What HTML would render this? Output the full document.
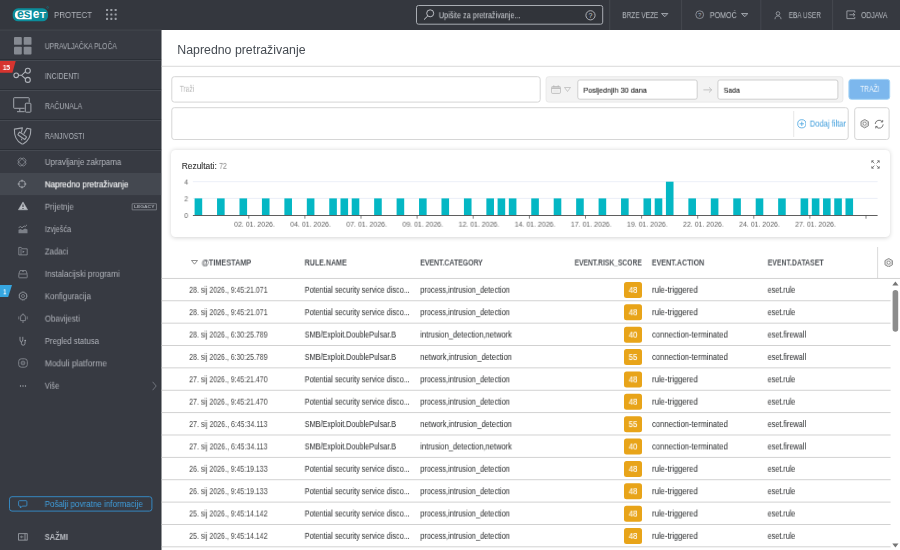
<!DOCTYPE html><html lang="hr"><head><meta charset="utf-8"><title>ESET PROTECT - Napredno pretraživanje</title><style>
html,body{margin:0;padding:0;width:900px;height:550px;overflow:hidden;background:#fff;}
body{position:relative;font-family:"Liberation Sans", sans-serif;}
.a{position:absolute;display:block;margin:0;padding:0;}
.t{position:absolute;white-space:nowrap;transform-origin:0 0;display:block;will-change:transform;}
</style></head><body>
<svg class="a" style="left:-1px;top:-1px" width="902" height="32"><rect x="1.00" y="1.00" width="900.00" height="30.00" fill="#34373e"/></svg>
<svg class="a" style="left:12px;top:6.3px;" width="38" height="17" viewBox="0 0 38 17"><rect x="0.7" y="2.3" width="35.3" height="13" rx="5.4" fill="#0b8d9b"/><path d="M7.4 4.4 H19.7 V13.3 H7.4 Q2.9 13.3 2.9 8.85 Q2.9 4.4 7.4 4.4 Z" fill="#fff"/><text x="5" y="12.35" font-family="Liberation Sans, sans-serif" font-weight="700" font-size="12" fill="#0b8d9b" textLength="13.6" lengthAdjust="spacingAndGlyphs">es</text><text x="20.7" y="12.35" font-family="Liberation Sans, sans-serif" font-weight="700" font-size="12" fill="#fff" textLength="6.6" lengthAdjust="spacingAndGlyphs">e</text><text x="27.7" y="12.3" font-family="Liberation Sans, sans-serif" font-weight="700" font-size="8.9" fill="#fff" textLength="6.2" lengthAdjust="spacingAndGlyphs">T</text><circle cx="35.6" cy="1.4" r="0.9" fill="none" stroke="#0b8d9b" stroke-width="0.4"/></svg>
<svg class="a" style="left:106px;top:9.4px;" width="12" height="11.5" viewBox="0 0 12 11.5"><rect x="0" y="0" width="2.1" height="2.1" rx="0.6" fill="#9da1a8"/><rect x="0" y="4.4" width="2.1" height="2.1" rx="0.6" fill="#9da1a8"/><rect x="0" y="8.8" width="2.1" height="2.1" rx="0.6" fill="#9da1a8"/><rect x="4.3" y="0" width="2.1" height="2.1" rx="0.6" fill="#9da1a8"/><rect x="4.3" y="4.4" width="2.1" height="2.1" rx="0.6" fill="#9da1a8"/><rect x="4.3" y="8.8" width="2.1" height="2.1" rx="0.6" fill="#9da1a8"/><rect x="8.6" y="0" width="2.1" height="2.1" rx="0.6" fill="#9da1a8"/><rect x="8.6" y="4.4" width="2.1" height="2.1" rx="0.6" fill="#9da1a8"/><rect x="8.6" y="8.8" width="2.1" height="2.1" rx="0.6" fill="#9da1a8"/></svg>
<svg class="a" style="left:415px;top:4px" width="190" height="22"><rect x="1.50" y="1.50" width="186.20" height="18.70" rx="2.00" fill="#31343a" stroke="#a9adb3" stroke-width="1.0"/></svg>
<svg class="a" style="left:422.5px;top:8.5px;" width="12" height="12" viewBox="0 0 12 12"><circle cx="7.2" cy="4.3" r="3.5" fill="none" stroke="#c9ccd1" stroke-width="0.9"/><path d="M4.8 6.9 L1 10.6" stroke="#c9ccd1" stroke-width="1" fill="none"/></svg>
<svg class="a" style="left:585.3px;top:9.8px;" width="11" height="11" viewBox="0 0 11 11"><circle cx="5.5" cy="5.3" r="4.6" fill="none" stroke="#c9ccd1" stroke-width="0.8"/><text x="5.5" y="8" text-anchor="middle" font-family="Liberation Sans, sans-serif" font-size="7" fill="#c9ccd1">?</text></svg>
<svg class="a" style="left:608px;top:-1px" width="293" height="32"><rect x="1.60" y="1.00" width="290.40" height="30.00" fill="#363940"/></svg>
<svg class="a" style="left:608px;top:-1px" width="4" height="32"><rect x="1.30" y="1.00" width="0.90" height="30.00" fill="#474a51"/></svg>
<svg class="a" style="left:680px;top:-1px" width="4" height="32"><rect x="1.20" y="1.00" width="0.90" height="30.00" fill="#474a51"/></svg>
<svg class="a" style="left:759px;top:-1px" width="4" height="32"><rect x="1.40" y="1.00" width="0.90" height="30.00" fill="#474a51"/></svg>
<svg class="a" style="left:831px;top:-1px" width="4" height="32"><rect x="1.20" y="1.00" width="0.90" height="30.00" fill="#474a51"/></svg>
<svg class="a" style="left:661.2px;top:13.1px;" width="7.4" height="4.5" viewBox="0 0 7.4 4.5"><path d="M0.5 0.5 H6.9 L3.7 3.8 Z" fill="#a6aab1" fill-opacity="0.22" stroke="#a6aab1" stroke-width="0.9" stroke-linejoin="round"/></svg>
<svg class="a" style="left:695.2px;top:10.4px;" width="9.4" height="9.4" viewBox="0 0 9.4 9.4"><circle cx="4.7" cy="4.7" r="3.9" fill="none" stroke="#a9adb4" stroke-width="0.7"/><text x="4.7" y="7" text-anchor="middle" font-family="Liberation Sans, sans-serif" font-size="6" fill="#a9adb4">?</text></svg>
<svg class="a" style="left:740.8px;top:13.1px;" width="7.4" height="4.5" viewBox="0 0 7.4 4.5"><path d="M0.5 0.5 H6.9 L3.7 3.8 Z" fill="#a6aab1" fill-opacity="0.22" stroke="#a6aab1" stroke-width="0.9" stroke-linejoin="round"/></svg>
<svg class="a" style="left:774.2px;top:10.6px;" width="9" height="10" viewBox="0 0 9 10"><circle cx="4" cy="2.5" r="1.8" fill="none" stroke="#a9adb4" stroke-width="0.75"/><path d="M1 8.2 C1 5.8 2.4 5 4 5 S7 5.8 7 8.2" fill="none" stroke="#a9adb4" stroke-width="0.75"/></svg>
<svg class="a" style="left:845.8px;top:9.9px;" width="10" height="10" viewBox="0 0 10 10"><path d="M8.8 2.6 V0.9 H0.9 V8.6 H8.8 V6.9" fill="none" stroke="#a9adb4" stroke-width="0.8"/><path d="M3.4 4.75 H8.8 M7 3 L8.8 4.75 L7 6.5" fill="none" stroke="#a9adb4" stroke-width="0.8"/></svg>
<svg class="a" style="left:-1px;top:29px" width="164" height="522"><rect x="1.00" y="1.00" width="161.60" height="520.00" fill="#373a42"/></svg>
<svg class="a" style="left:159px;top:29px" width="4" height="522"><rect x="1.40" y="1.00" width="1.20" height="520.00" fill="#33363c"/></svg>
<svg class="a" style="left:-1px;top:28px" width="164" height="4"><rect x="1.00" y="1.60" width="161.60" height="0.90" fill="#45484f"/></svg>
<svg class="a" style="left:-1px;top:58px" width="164" height="4"><rect x="1.00" y="1.20" width="161.60" height="0.90" fill="#2a2d33"/></svg>
<svg class="a" style="left:-1px;top:59px" width="164" height="3"><rect x="1.00" y="1.10" width="161.60" height="0.90" fill="#484c54"/></svg>
<svg class="a" style="left:-1px;top:88px" width="164" height="4"><rect x="1.00" y="1.20" width="161.60" height="0.90" fill="#2a2d33"/></svg>
<svg class="a" style="left:-1px;top:89px" width="164" height="3"><rect x="1.00" y="1.10" width="161.60" height="0.90" fill="#484c54"/></svg>
<svg class="a" style="left:-1px;top:118px" width="164" height="4"><rect x="1.00" y="1.20" width="161.60" height="0.90" fill="#2a2d33"/></svg>
<svg class="a" style="left:-1px;top:119px" width="164" height="3"><rect x="1.00" y="1.10" width="161.60" height="0.90" fill="#484c54"/></svg>
<svg class="a" style="left:-1px;top:148px" width="164" height="4"><rect x="1.00" y="1.20" width="161.60" height="0.90" fill="#2a2d33"/></svg>
<svg class="a" style="left:-1px;top:149px" width="164" height="3"><rect x="1.00" y="1.10" width="161.60" height="0.90" fill="#484c54"/></svg>
<svg class="a" style="left:13.7px;top:37.2px;" width="18" height="18" viewBox="0 0 18 18"><rect x="0" y="0" width="7.8" height="7.8" rx="0.9" fill="#868a92"/><rect x="0" y="9.7" width="7.8" height="7.8" rx="0.9" fill="#868a92"/><rect x="9.7" y="0" width="7.8" height="7.8" rx="0.9" fill="#868a92"/><rect x="9.7" y="9.7" width="7.8" height="7.8" rx="0.9" fill="#868a92"/></svg>
<svg class="a" style="left:13.3px;top:66.3px;" width="19" height="18" viewBox="0 0 19 18"><circle cx="3.2" cy="9.3" r="2.3" fill="none" stroke="#b0b4bb" stroke-width="1.1"/><circle cx="14.8" cy="4.7" r="2.5" fill="none" stroke="#b0b4bb" stroke-width="1.1"/><circle cx="14.8" cy="13.9" r="2.5" fill="none" stroke="#b0b4bb" stroke-width="1.1"/><path d="M5.5 9.3 H8.6 L12.5 5.7 M8.6 9.3 L12.5 12.9" fill="none" stroke="#b0b4bb" stroke-width="1.1"/></svg>
<svg class="a" style="left:0px;top:61.3px;" width="16" height="12" viewBox="0 0 16 12"><path d="M0 0 H15.7 L12.4 11.8 H0 Z" fill="#d6342f"/></svg>
<svg class="a" style="left:13.2px;top:97.3px;" width="19" height="17" viewBox="0 0 19 17"><path d="M11.6 11.3 H1.3 Q0.7 11.3 0.7 10.7 V1.3 Q0.7 0.7 1.3 0.7 H15.6 Q16.2 0.7 16.2 1.3 V5.4" fill="none" stroke="#a3a7ae" stroke-width="1"/><path d="M6.8 11.5 V14.4 M4 14.7 H11.6" fill="none" stroke="#a3a7ae" stroke-width="1"/><rect x="12.3" y="6.2" width="5.6" height="9" rx="0.8" fill="#373a42" stroke="#a3a7ae" stroke-width="1"/></svg>
<svg class="a" style="left:12.8px;top:126.5px;" width="20" height="19" viewBox="0 0 20 19"><path d="M8.5 5 L9.4 0.9 L1.4 2.1 C1.1 8.6 2.6 13.4 8.6 16.8 Q9.5 17.3 10.4 16.8 C16.4 13.4 18 8.6 17.8 2.1 L14 1.3 L11 6.4" fill="none" stroke="#a3a7ae" stroke-width="1.1" stroke-linejoin="round" stroke-linecap="round"/><g transform="rotate(35 9.2 8.8)"><rect x="4.9" y="7.2" width="8.6" height="3.2" rx="0.5" fill="none" stroke="#a3a7ae" stroke-width="1.1"/></g><path d="M8.5 11.7 L8.8 13.4" stroke="#a3a7ae" stroke-width="1" fill="none"/></svg>
<svg class="a" style="left:-1px;top:172px" width="164" height="25"><rect x="1.00" y="1.00" width="161.60" height="22.10" fill="#444850"/></svg>
<svg class="a" style="left:16.9px;top:156.7px;" width="10" height="10" viewBox="0 0 10 10"><g transform="rotate(45 5 5)" fill="none" stroke="#8f939b" stroke-width="0.7"><rect x="0.7" y="2.6" width="8.6" height="4.8" rx="2"/><rect x="2.6" y="0.7" width="4.8" height="8.6" rx="2"/></g></svg>
<svg class="a" style="left:16.9px;top:179.07px;" width="10" height="10" viewBox="0 0 10 10"><circle cx="5" cy="5" r="3.4" fill="none" stroke="#a9adb4" stroke-width="0.8"/><path d="M5 0.6 V3.2 M5 6.8 V9.4 M0.6 5 H3.2 M6.8 5 H9.4" stroke="#a9adb4" stroke-width="0.8"/></svg>
<svg class="a" style="left:17.5px;top:201.44px;" width="10" height="10" viewBox="0 0 10 10"><path d="M5 0.9 L9.6 8.8 H0.4 Z" fill="#b9bcc2" stroke="#b9bcc2" stroke-width="0.5" stroke-linejoin="round"/><path d="M5 3.6 V6.1 M5 6.9 V7.9" stroke="#373a42" stroke-width="1.1"/></svg>
<svg class="a" style="left:17.5px;top:223.81px;" width="10" height="10" viewBox="0 0 10 10"><path d="M0.6 3.6 L2.6 2.6 L4 3.8 L6.2 2 L7.2 2.6 L9 0.8" fill="none" stroke="#a3a7ae" stroke-width="0.7"/><path d="M0.5 9.2 V5.8 L2.6 5 L4.4 6 L7 4.6 L9.5 5.4 V9.2 Z" fill="#7b7f87"/></svg>
<svg class="a" style="left:17.5px;top:246.18px;" width="10" height="10" viewBox="0 0 10 10"><path d="M0.8 8.9 V1.4 H3.2 L4 2.8 H9.2 V8.9 Z" fill="none" stroke="#8f939b" stroke-width="0.8"/><path d="M3 3 V8.8" stroke="#8f939b" stroke-width="0.7"/><path d="M4.6 4.6 L6.6 5.8 L4.6 7 Z" fill="#8f939b"/></svg>
<svg class="a" style="left:17.5px;top:268.55px;" width="10" height="10" viewBox="0 0 10 10"><path d="M0.8 5 L2 1.6 H8 L9.2 5" fill="none" stroke="#8f939b" stroke-width="0.8"/><rect x="0.8" y="5" width="8.4" height="3.8" rx="0.5" fill="none" stroke="#8f939b" stroke-width="0.8"/><path d="M3.8 1.8 H6.2 L5 3.2 Z" fill="#8f939b"/></svg>
<svg class="a" style="left:17.5px;top:291.32px;" width="10" height="10" viewBox="0 0 10 10"><circle cx="5" cy="5" r="1.5" fill="none" stroke="#8f939b" stroke-width="0.7"/><path d="M5 1 L8.5 3 V7 L5 9 L1.5 7 V3 Z" fill="none" stroke="#8f939b" stroke-width="0.8" stroke-linejoin="round"/><circle cx="5" cy="5" r="4.2" fill="none" stroke="#8f939b" stroke-width="0.6" stroke-dasharray="1.3 0.9"/></svg>
<svg class="a" style="left:17.5px;top:313.29px;" width="10" height="10" viewBox="0 0 10 10"><path d="M2.6 7.6 V4.2 Q2.6 1.6 5 1.6 Q7.4 1.6 7.4 4.2 V7.6 Z" fill="none" stroke="#8f939b" stroke-width="0.8"/><path d="M5 0.4 V1.6 M4 9 H6" stroke="#8f939b" stroke-width="0.8"/><path d="M0.8 3.4 V6.4 M9.2 3.4 V6.4" stroke="#8f939b" stroke-width="0.7"/></svg>
<svg class="a" style="left:18.1px;top:335.66px;" width="10" height="10" viewBox="0 0 10 10"><path d="M2 0.8 V3.8 Q2 5.8 3.4 5.8 Q4.8 5.8 4.8 3.8 V0.8 M3.4 5.8 V7.4 Q3.4 9.2 5.2 9.2 Q7 9.2 7 7.4 V5.6" fill="none" stroke="#a3a7ae" stroke-width="0.8"/><circle cx="7.2" cy="4.6" r="0.9" fill="#a3a7ae"/></svg>
<svg class="a" style="left:17.5px;top:358.03000000000003px;" width="10" height="10" viewBox="0 0 10 10"><rect x="0.7" y="0.8" width="8.6" height="8.4" rx="2.6" fill="none" stroke="#8f939b" stroke-width="0.8"/><circle cx="5" cy="5" r="1.9" fill="none" stroke="#8f939b" stroke-width="0.7"/><path d="M3.6 5 H6.4" stroke="#8f939b" stroke-width="0.7"/></svg>
<svg class="a" style="left:17.5px;top:380.70000000000005px;" width="10" height="10" viewBox="0 0 10 10"><circle cx="2.5" cy="5" r="0.65" fill="#a9adb4"/><circle cx="5" cy="5" r="0.65" fill="#a9adb4"/><circle cx="7.5" cy="5" r="0.65" fill="#a9adb4"/></svg>
<svg class="a" style="left:130px;top:202px" width="28" height="10"><rect x="2.15" y="1.75" width="24.30" height="6.10" rx="0.05" fill="none" stroke="#8f939b" stroke-width="0.7"/></svg>
<svg class="a" style="left:151.5px;top:380.5px;" width="5" height="10" viewBox="0 0 5 10"><path d="M0.6 0.8 L4.2 5 L0.6 9.2" fill="none" stroke="#7f838b" stroke-width="0.8"/></svg>
<svg class="a" style="left:0px;top:285px;" width="13" height="12.2" viewBox="0 0 13 12.2"><path d="M0 0 H12 L8.2 12 H0 Z" fill="#36a6e0"/></svg>
<svg class="a" style="left:8px;top:495px" width="146" height="18"><rect x="1.50" y="1.70" width="142.40" height="14.40" rx="2.50" fill="none" stroke="#3587c0" stroke-width="1.0"/></svg>
<svg class="a" style="left:17.6px;top:499.6px;" width="10" height="9" viewBox="0 0 10 9"><path d="M1.5 0.7 H8 Q8.9 0.7 8.9 1.6 V5.2 Q8.9 6.1 8 6.1 H4.2 L2.4 8 V6.1 H1.5 Q0.6 6.1 0.6 5.2 V1.6 Q0.6 0.7 1.5 0.7 Z" fill="none" stroke="#3b97d6" stroke-width="0.8"/></svg>
<svg class="a" style="left:17.6px;top:533.4px;" width="10" height="8" viewBox="0 0 10 8"><rect x="0.6" y="0.7" width="8.6" height="6.4" fill="none" stroke="#a3a7ae" stroke-width="0.8"/><path d="M7 0.7 V7.1" stroke="#a3a7ae" stroke-width="0.8"/><path d="M5.4 3.9 H2.6 M3.8 2.8 L2.6 3.9 L3.8 5" fill="none" stroke="#a3a7ae" stroke-width="0.7"/></svg>
<svg class="a" style="left:160px;top:29px" width="741" height="522"><rect x="1.60" y="1.00" width="738.40" height="520.00" fill="#fff"/></svg>
<svg class="a" style="left:160px;top:64px" width="741" height="4"><rect x="1.60" y="1.80" width="738.40" height="0.90" fill="#d4d4d4"/></svg>
<svg class="a" style="left:170px;top:75px" width="372" height="29"><rect x="1.80" y="1.70" width="368.40" height="25.40" rx="2.50" fill="#fff" stroke="#d6d6d6" stroke-width="1.0"/></svg>
<svg class="a" style="left:544px;top:75px" width="301" height="29"><rect x="2.10" y="1.70" width="296.80" height="25.40" rx="2.50" fill="#f3f3f3" stroke="#e9e9e9" stroke-width="1.0"/></svg>
<svg class="a" style="left:551px;top:85px;" width="10" height="9" viewBox="0 0 10 9"><rect x="0.6" y="1.5" width="8.8" height="6.9" rx="0.9" fill="#f7f7f7" stroke="#b5b5b5" stroke-width="0.8"/><rect x="1" y="1.9" width="8" height="1.4" fill="#cfcfcf"/><path d="M0.6 3.5 H9.4 M2.8 0.3 V2.2 M7.2 0.3 V2.2" stroke="#b5b5b5" stroke-width="0.8"/><path d="M2.2 5.2 H7.8 M2.2 6.8 H7.8" stroke="#dcdcdc" stroke-width="0.6"/></svg>
<svg class="a" style="left:564px;top:87px;" width="7" height="5.2" viewBox="0 0 7 5.2"><path d="M0.5 0.5 H6.5 L3.5 4.5 Z" fill="#b5b5b5" fill-opacity="0" stroke="#b5b5b5" stroke-width="0.7" stroke-linejoin="round"/></svg>
<svg class="a" style="left:576px;top:78px" width="123" height="23"><rect x="1.80" y="2.00" width="119.40" height="19.20" rx="2.00" fill="#fff" stroke="#cfcfcf" stroke-width="1.0"/></svg>
<svg class="a" style="left:703.4px;top:85.6px;" width="10" height="8" viewBox="0 0 10 8"><path d="M0.4 3.9 H8.6 M6 1.3 L8.7 3.9 L6 6.5" fill="none" stroke="#b0b0b0" stroke-width="0.7"/></svg>
<svg class="a" style="left:716px;top:78px" width="124" height="23"><rect x="1.90" y="2.00" width="120.00" height="19.20" rx="2.00" fill="#fff" stroke="#cfcfcf" stroke-width="1.0"/></svg>
<svg class="a" style="left:847px;top:77px" width="45" height="24"><rect x="1.90" y="2.40" width="40.80" height="19.90" rx="2.50" fill="#7cb7ed" stroke="#a3d3f6" stroke-width="1.0"/></svg>
<svg class="a" style="left:170px;top:106px" width="680" height="35"><rect x="1.80" y="1.70" width="676.40" height="31.80" rx="2.50" fill="#fff" stroke="#d6d6d6" stroke-width="1.0"/></svg>
<svg class="a" style="left:792px;top:110px" width="4" height="28"><rect x="1.30" y="1.00" width="0.90" height="26.00" fill="#e4e4e4"/></svg>
<svg class="a" style="left:796.9px;top:119.1px;" width="9.6" height="9.6" viewBox="0 0 9.6 9.6"><circle cx="4.8" cy="4.8" r="4.1" fill="none" stroke="#46a3e0" stroke-width="0.8"/><path d="M4.8 2.6 V7 M2.6 4.8 H7" stroke="#46a3e0" stroke-width="0.8"/></svg>
<svg class="a" style="left:853px;top:106px" width="38" height="35"><rect x="1.70" y="1.70" width="34.40" height="31.80" rx="2.50" fill="#fff" stroke="#d6d6d6" stroke-width="1.0"/></svg>
<svg class="a" style="left:859.8px;top:119.2px;" width="9.4" height="9.4" viewBox="0 0 9.4 9.4"><circle cx="4.7" cy="4.7" r="1.6" fill="none" stroke="#6e6e6e" stroke-width="0.7"/><path d="M4.7 0.5 L8.4 2.6 V6.8 L4.7 8.9 L1 6.8 V2.6 Z" fill="none" stroke="#6e6e6e" stroke-width="0.8" stroke-linejoin="round"/><path d="M4.7 1.6 L7.4 3.15 V6.25 L4.7 7.8 L2 6.25 V3.15 Z" fill="none" stroke="#6e6e6e" stroke-width="0.45" stroke-linejoin="round" opacity="0.7"/></svg>
<svg class="a" style="left:874.2px;top:118.8px;" width="10.4" height="10.4" viewBox="0 0 10.4 10.4"><path d="M1.2 5 A4 4 0 0 1 8.3 2.7" fill="none" stroke="#4a4a4a" stroke-width="0.75"/><path d="M9.2 5.4 A4 4 0 0 1 2.1 7.7" fill="none" stroke="#4a4a4a" stroke-width="0.75"/><path d="M8.7 1 V3 H6.8 M1.7 9.4 V7.4 H3.6" fill="none" stroke="#4a4a4a" stroke-width="0.7"/></svg>
<div class="a" style="left:171.2px;top:150px;width:718.6px;height:86.8px;background:#fff;border-radius:4.5px;box-shadow:0 0.6px 4.5px rgba(0,0,0,0.17);"></div>
<svg class="a" style="left:871px;top:159.8px;" width="9" height="9" viewBox="0 0 9 9"><path d="M5.6 3.4 L8.2 0.8 M6.2 0.8 H8.2 V2.8 M3.4 5.6 L0.8 8.2 M0.8 6.2 V8.2 H2.8 M3.4 3.4 L0.8 0.8 M0.8 2.8 V0.8 H2.8 M5.6 5.6 L8.2 8.2 M8.2 6.2 V8.2 H6.2" fill="none" stroke="#555" stroke-width="0.7"/></svg>
<svg class="a" style="left:0px;top:0px;" width="900" height="550" viewBox="0 0 900 550"><path d="M192.9 181.7 H877.6 M192.9 198.4 H877.6" stroke="#e6eaf5" stroke-width="0.8"/><rect x="194.60" y="198.4" width="7.6" height="16.8" fill="#04b7c4"/><rect x="217.04" y="198.4" width="7.6" height="16.8" fill="#04b7c4"/><rect x="239.49" y="198.4" width="7.6" height="16.8" fill="#04b7c4"/><rect x="261.93" y="198.4" width="7.6" height="16.8" fill="#04b7c4"/><rect x="284.38" y="198.4" width="7.6" height="16.8" fill="#04b7c4"/><rect x="306.82" y="198.4" width="7.6" height="16.8" fill="#04b7c4"/><rect x="329.26" y="198.4" width="7.6" height="16.8" fill="#04b7c4"/><rect x="340.49" y="198.4" width="7.6" height="16.8" fill="#04b7c4"/><rect x="351.71" y="198.4" width="7.6" height="16.8" fill="#04b7c4"/><rect x="374.15" y="198.4" width="7.6" height="16.8" fill="#04b7c4"/><rect x="396.60" y="198.4" width="7.6" height="16.8" fill="#04b7c4"/><rect x="419.04" y="198.4" width="7.6" height="16.8" fill="#04b7c4"/><rect x="441.48" y="198.4" width="7.6" height="16.8" fill="#04b7c4"/><rect x="463.93" y="198.4" width="7.6" height="16.8" fill="#04b7c4"/><rect x="486.37" y="198.4" width="7.6" height="16.8" fill="#04b7c4"/><rect x="497.59" y="198.4" width="7.6" height="16.8" fill="#04b7c4"/><rect x="508.82" y="198.4" width="7.6" height="16.8" fill="#04b7c4"/><rect x="531.26" y="198.4" width="7.6" height="16.8" fill="#04b7c4"/><rect x="553.70" y="198.4" width="7.6" height="16.8" fill="#04b7c4"/><rect x="576.15" y="198.4" width="7.6" height="16.8" fill="#04b7c4"/><rect x="598.59" y="198.4" width="7.6" height="16.8" fill="#04b7c4"/><rect x="621.04" y="198.4" width="7.6" height="16.8" fill="#04b7c4"/><rect x="643.48" y="198.4" width="7.6" height="16.8" fill="#04b7c4"/><rect x="654.70" y="198.4" width="7.6" height="16.8" fill="#04b7c4"/><rect x="688.37" y="198.4" width="7.6" height="16.8" fill="#04b7c4"/><rect x="710.81" y="198.4" width="7.6" height="16.8" fill="#04b7c4"/><rect x="733.26" y="198.4" width="7.6" height="16.8" fill="#04b7c4"/><rect x="755.70" y="198.4" width="7.6" height="16.8" fill="#04b7c4"/><rect x="778.14" y="198.4" width="7.6" height="16.8" fill="#04b7c4"/><rect x="800.59" y="198.4" width="7.6" height="16.8" fill="#04b7c4"/><rect x="811.81" y="198.4" width="7.6" height="16.8" fill="#04b7c4"/><rect x="823.03" y="198.4" width="7.6" height="16.8" fill="#04b7c4"/><rect x="834.25" y="198.4" width="7.6" height="16.8" fill="#04b7c4"/><rect x="845.48" y="198.4" width="7.6" height="16.8" fill="#04b7c4"/><rect x="665.92" y="181.7" width="7.6" height="33.5" fill="#04b7c4"/><path d="M192.9 215.5 H877.6" stroke="#4d4d4d" stroke-width="0.9"/><path d="M248.8 215.5 V218.7" stroke="#4d4d4d" stroke-width="0.7"/><path d="M304.9 215.5 V218.7" stroke="#4d4d4d" stroke-width="0.7"/><path d="M361.0 215.5 V218.7" stroke="#4d4d4d" stroke-width="0.7"/><path d="M417.1 215.5 V218.7" stroke="#4d4d4d" stroke-width="0.7"/><path d="M473.2 215.5 V218.7" stroke="#4d4d4d" stroke-width="0.7"/><path d="M529.4 215.5 V218.7" stroke="#4d4d4d" stroke-width="0.7"/><path d="M585.5 215.5 V218.7" stroke="#4d4d4d" stroke-width="0.7"/><path d="M641.6 215.5 V218.7" stroke="#4d4d4d" stroke-width="0.7"/><path d="M697.7 215.5 V218.7" stroke="#4d4d4d" stroke-width="0.7"/><path d="M753.8 215.5 V218.7" stroke="#4d4d4d" stroke-width="0.7"/><path d="M809.9 215.5 V218.7" stroke="#4d4d4d" stroke-width="0.7"/><path d="M866.0 215.5 V218.7" stroke="#4d4d4d" stroke-width="0.7"/></svg>
<svg class="a" style="left:190.6px;top:260.2px;" width="7.4" height="5.4" viewBox="0 0 7.4 5.4"><path d="M0.5 0.5 H6.5 L3.5 4.2 Z" fill="none" stroke="#6a6a6a" stroke-width="0.75" stroke-linejoin="round"/></svg>
<svg class="a" style="left:876px;top:246px" width="4" height="34"><rect x="1.20" y="1.00" width="0.90" height="31.50" fill="#d6d6d6"/></svg>
<svg class="a" style="left:884.2px;top:257.9px;" width="9.4" height="9.4" viewBox="0 0 9.4 9.4"><circle cx="4.7" cy="4.7" r="1.6" fill="none" stroke="#6e6e6e" stroke-width="0.7"/><path d="M4.7 0.5 L8.4 2.6 V6.8 L4.7 8.9 L1 6.8 V2.6 Z" fill="none" stroke="#6e6e6e" stroke-width="0.8" stroke-linejoin="round"/><path d="M4.7 1.6 L7.4 3.15 V6.25 L4.7 7.8 L2 6.25 V3.15 Z" fill="none" stroke="#6e6e6e" stroke-width="0.45" stroke-linejoin="round" opacity="0.7"/></svg>
<svg class="a" style="left:160px;top:276px" width="741" height="4"><rect x="1.60" y="1.95" width="738.40" height="0.90" fill="#cdcdcd"/></svg>
<svg class="a" style="left:623px;top:281px" width="20" height="18"><rect x="1.00" y="1.00" width="18.00" height="16.00" rx="2.5" fill="#e8a419"/></svg>
<svg class="a" style="left:160px;top:299px" width="732" height="4"><rect x="1.60" y="1.32" width="729.00" height="0.90" fill="#cdcdcd"/></svg>
<svg class="a" style="left:623px;top:303px" width="20" height="19"><rect x="1.00" y="1.37" width="18.00" height="16.00" rx="2.5" fill="#e8a419"/></svg>
<svg class="a" style="left:160px;top:321px" width="732" height="4"><rect x="1.60" y="1.69" width="729.00" height="0.90" fill="#cdcdcd"/></svg>
<svg class="a" style="left:623px;top:325px" width="20" height="19"><rect x="1.00" y="1.74" width="18.00" height="16.00" rx="2.5" fill="#e8a419"/></svg>
<svg class="a" style="left:160px;top:344px" width="732" height="3"><rect x="1.60" y="1.06" width="729.00" height="0.90" fill="#cdcdcd"/></svg>
<svg class="a" style="left:623px;top:348px" width="20" height="19"><rect x="1.00" y="1.11" width="18.00" height="16.00" rx="2.5" fill="#e8a419"/></svg>
<svg class="a" style="left:160px;top:366px" width="732" height="4"><rect x="1.60" y="1.43" width="729.00" height="0.90" fill="#cdcdcd"/></svg>
<svg class="a" style="left:623px;top:370px" width="20" height="19"><rect x="1.00" y="1.48" width="18.00" height="16.00" rx="2.5" fill="#e8a419"/></svg>
<svg class="a" style="left:160px;top:388px" width="732" height="4"><rect x="1.60" y="1.80" width="729.00" height="0.90" fill="#cdcdcd"/></svg>
<svg class="a" style="left:623px;top:392px" width="20" height="19"><rect x="1.00" y="1.85" width="18.00" height="16.00" rx="2.5" fill="#e8a419"/></svg>
<svg class="a" style="left:160px;top:411px" width="732" height="4"><rect x="1.60" y="1.17" width="729.00" height="0.90" fill="#cdcdcd"/></svg>
<svg class="a" style="left:623px;top:415px" width="20" height="19"><rect x="1.00" y="1.22" width="18.00" height="16.00" rx="2.5" fill="#e8a419"/></svg>
<svg class="a" style="left:160px;top:433px" width="732" height="4"><rect x="1.60" y="1.54" width="729.00" height="0.90" fill="#cdcdcd"/></svg>
<svg class="a" style="left:623px;top:437px" width="20" height="19"><rect x="1.00" y="1.59" width="18.00" height="16.00" rx="2.5" fill="#e8a419"/></svg>
<svg class="a" style="left:160px;top:455px" width="732" height="4"><rect x="1.60" y="1.91" width="729.00" height="0.90" fill="#cdcdcd"/></svg>
<svg class="a" style="left:623px;top:459px" width="20" height="19"><rect x="1.00" y="1.96" width="18.00" height="16.00" rx="2.5" fill="#e8a419"/></svg>
<svg class="a" style="left:160px;top:478px" width="732" height="4"><rect x="1.60" y="1.28" width="729.00" height="0.90" fill="#cdcdcd"/></svg>
<svg class="a" style="left:623px;top:482px" width="20" height="19"><rect x="1.00" y="1.33" width="18.00" height="16.00" rx="2.5" fill="#e8a419"/></svg>
<svg class="a" style="left:160px;top:500px" width="732" height="4"><rect x="1.60" y="1.65" width="729.00" height="0.90" fill="#cdcdcd"/></svg>
<svg class="a" style="left:623px;top:504px" width="20" height="19"><rect x="1.00" y="1.70" width="18.00" height="16.00" rx="2.5" fill="#e8a419"/></svg>
<svg class="a" style="left:160px;top:523px" width="732" height="3"><rect x="1.60" y="1.02" width="729.00" height="0.90" fill="#cdcdcd"/></svg>
<svg class="a" style="left:623px;top:527px" width="20" height="19"><rect x="1.00" y="1.07" width="18.00" height="16.00" rx="2.5" fill="#e8a419"/></svg>
<svg class="a" style="left:160px;top:545px" width="732" height="4"><rect x="1.60" y="1.39" width="729.00" height="0.90" fill="#cdcdcd"/></svg>
<svg class="a" style="left:891px;top:289px" width="9" height="44"><rect x="1.60" y="1.00" width="5.60" height="41.80" rx="2.8" fill="#8c8c8c"/></svg>
<svg class="a" style="left:891.8px;top:281.4px;" width="7" height="5" viewBox="0 0 7 5"><path d="M0.3 4.4 L3.4 0.4 L6.5 4.4 Z" fill="#757575"/></svg>
<svg class="a" style="left:891.8px;top:543.4px;" width="7" height="5" viewBox="0 0 7 5"><path d="M0.3 0.4 L3.4 4.4 L6.5 0.4 Z" fill="#757575"/></svg>
<span class="t" style="left:54px;top:8px;font-size:9.2px;line-height:14px;color:#b0b3ba;transform:translate(0.00px,0.00px) scaleX(0.8655);">PROTECT</span>
<span class="t" style="left:438px;top:8px;font-size:8.8px;line-height:14px;color:#cfd2d7;transform:translate(0.80px,0.20px) scaleX(0.8282);">Upišite za pretraživanje...</span>
<span class="t" style="left:622px;top:8px;font-size:8.7px;line-height:14px;color:#bcc0c6;transform:translate(0.30px,0.10px) scaleX(0.7456);">BRZE VEZE</span>
<span class="t" style="left:709px;top:8px;font-size:8.7px;line-height:14px;color:#bcc0c6;transform:translate(0.80px,0.10px) scaleX(0.8225);">POMOĆ</span>
<span class="t" style="left:788px;top:8px;font-size:8.7px;line-height:14px;color:#bcc0c6;transform:translate(0.80px,0.10px) scaleX(0.7362);">EBA USER</span>
<span class="t" style="left:861px;top:8px;font-size:8.7px;line-height:14px;color:#bcc0c6;transform:translate(0.00px,0.10px) scaleX(0.7888);">ODJAVA</span>
<span class="t" style="left:44px;top:40px;font-size:8.6px;line-height:13px;color:#adb1b8;transform:translate(0.80px,0.10px) scaleX(0.7784);">UPRAVLJAČKA PLOČA</span>
<span class="t" style="left:44px;top:70px;font-size:8.6px;line-height:13px;color:#adb1b8;transform:translate(0.80px,0.00px) scaleX(0.8006);">INCIDENTI</span>
<span class="t" style="left:2px;top:62px;font-size:7.4px;line-height:12px;color:#fff;font-weight:700;transform:translate(0.80px,0.00px) scaleX(0.8865);">15</span>
<span class="t" style="left:44px;top:100px;font-size:8.6px;line-height:13px;color:#adb1b8;transform:translate(0.90px,0.10px) scaleX(0.7968);">RAČUNALA</span>
<span class="t" style="left:44px;top:130px;font-size:8.6px;line-height:13px;color:#adb1b8;transform:translate(0.90px,0.00px) scaleX(0.7763);">RANJIVOSTI</span>
<span class="t" style="left:44px;top:155px;font-size:8.7px;line-height:14px;color:#b0b3ba;transform:translate(0.80px,0.00px) scaleX(0.9092);">Upravljanje zakrpama</span>
<span class="t" style="left:44px;top:177px;font-size:8.7px;line-height:14px;color:#f4f5f6;-webkit-text-stroke:0.15px #f4f5f6;transform:translate(0.80px,0.37px) scaleX(0.9257);">Napredno pretraživanje</span>
<span class="t" style="left:44px;top:199px;font-size:8.7px;line-height:14px;color:#b0b3ba;transform:translate(0.80px,0.74px) scaleX(0.9238);">Prijetnje</span>
<span class="t" style="left:44px;top:222px;font-size:8.7px;line-height:14px;color:#b0b3ba;transform:translate(0.80px,0.11px) scaleX(0.8378);">Izvješća</span>
<span class="t" style="left:44px;top:244px;font-size:8.7px;line-height:14px;color:#b0b3ba;transform:translate(0.80px,0.48px) scaleX(0.8935);">Zadaci</span>
<span class="t" style="left:44px;top:266px;font-size:8.7px;line-height:14px;color:#b0b3ba;transform:translate(0.80px,0.85px) scaleX(0.9220);">Instalacijski programi</span>
<span class="t" style="left:44px;top:289px;font-size:8.7px;line-height:14px;color:#b0b3ba;transform:translate(0.80px,0.22px) scaleX(0.9157);">Konfiguracija</span>
<span class="t" style="left:44px;top:311px;font-size:8.7px;line-height:14px;color:#b0b3ba;transform:translate(0.80px,0.59px) scaleX(0.9173);">Obavijesti</span>
<span class="t" style="left:44px;top:333px;font-size:8.7px;line-height:14px;color:#b0b3ba;transform:translate(0.80px,0.96px) scaleX(0.8977);">Pregled statusa</span>
<span class="t" style="left:44px;top:356px;font-size:8.7px;line-height:14px;color:#b0b3ba;transform:translate(0.80px,0.33px) scaleX(0.9652);">Moduli platforme</span>
<span class="t" style="left:44px;top:378px;font-size:8.7px;line-height:14px;color:#b0b3ba;transform:translate(0.80px,0.70px) scaleX(0.8597);">Više</span>
<span class="t" style="left:134px;top:203px;font-size:4.4px;line-height:7px;color:#a5a9b0;font-weight:700;transform:translate(0.00px,0.40px) scaleX(1.1149);">LEGACY</span>
<span class="t" style="left:3px;top:286px;font-size:7.2px;line-height:11px;color:#fff;font-weight:700;transform:translate(0.30px,0.30px) scaleX(0.7250);">1</span>
<span class="t" style="left:44px;top:497px;font-size:8.7px;line-height:14px;color:#3f9fde;transform:translate(0.70px,0.00px) scaleX(0.9225);">Pošalji povratne informacije</span>
<span class="t" style="left:44px;top:530px;font-size:8.4px;line-height:13px;color:#b9bcc2;font-weight:700;transform:translate(0.70px,0.90px) scaleX(0.8940);">SAŽMI</span>
<span class="t" style="left:177px;top:40px;font-size:12.0px;line-height:18px;color:#454b52;transform:translate(0.30px,0.50px) scaleX(1.0277);">Napredno pretraživanje</span>
<span class="t" style="left:179px;top:82px;font-size:8.4px;line-height:13px;color:#b8b8b8;transform:translate(0.80px,0.80px) scaleX(0.7863);">Traži</span>
<span class="t" style="left:583px;top:83px;font-size:8.1px;line-height:13px;color:#1c1c1c;-webkit-text-stroke:0.12px #1c1c1c;transform:translate(0.30px,0.70px) scaleX(0.8973);">Posljednjih 30 dana</span>
<span class="t" style="left:723px;top:83px;font-size:8.1px;line-height:13px;color:#1c1c1c;-webkit-text-stroke:0.12px #1c1c1c;transform:translate(0.70px,0.70px) scaleX(0.8463);">Sada</span>
<span class="t" style="left:860px;top:82px;font-size:8.4px;line-height:13px;color:#eef6fd;transform:translate(0.20px,0.80px) scaleX(0.7933);">TRAŽI</span>
<span class="t" style="left:809px;top:117px;font-size:8.4px;line-height:13px;color:#3d9cdb;transform:translate(0.80px,0.60px) scaleX(0.9018);">Dodaj filtar</span>
<span class="t" style="left:181px;top:159px;font-size:8.2px;line-height:13px;color:#333;-webkit-text-stroke:0.1px #333;transform:translate(0.70px,0.90px) scaleX(1.0281);">Rezultati:</span>
<span class="t" style="left:219px;top:159px;font-size:8.3px;line-height:13px;color:#8c8c8c;transform:translate(0.10px,0.90px) scaleX(0.8447);">72</span>
<span class="t" style="left:184px;top:176px;font-size:6.9px;line-height:11px;color:#5c5c5c;transform:translate(0.40px,0.60px) scaleX(0.9626);">4</span>
<span class="t" style="left:184px;top:193px;font-size:6.9px;line-height:11px;color:#5c5c5c;transform:translate(0.40px,0.30px) scaleX(0.9626);">2</span>
<span class="t" style="left:184px;top:210px;font-size:6.9px;line-height:11px;color:#5c5c5c;transform:translate(0.40px,0.00px) scaleX(0.9626);">0</span>
<span class="t" style="left:234px;top:218px;font-size:7px;line-height:11px;color:#606060;transform:translate(0.10px,0.70px) scaleX(0.9957);">02. 01. 2026.</span>
<span class="t" style="left:290px;top:218px;font-size:7px;line-height:11px;color:#606060;transform:translate(0.21px,0.70px) scaleX(0.9957);">04. 01. 2026.</span>
<span class="t" style="left:346px;top:218px;font-size:7px;line-height:11px;color:#606060;transform:translate(0.32px,0.70px) scaleX(0.9957);">07. 01. 2026.</span>
<span class="t" style="left:402px;top:218px;font-size:7px;line-height:11px;color:#606060;transform:translate(0.43px,0.70px) scaleX(0.9957);">09. 01. 2026.</span>
<span class="t" style="left:458px;top:218px;font-size:7px;line-height:11px;color:#606060;transform:translate(0.54px,0.70px) scaleX(0.9957);">12. 01. 2026.</span>
<span class="t" style="left:514px;top:218px;font-size:7px;line-height:11px;color:#606060;transform:translate(0.65px,0.70px) scaleX(0.9957);">14. 01. 2026.</span>
<span class="t" style="left:570px;top:218px;font-size:7px;line-height:11px;color:#606060;transform:translate(0.76px,0.70px) scaleX(0.9957);">17. 01. 2026.</span>
<span class="t" style="left:626px;top:218px;font-size:7px;line-height:11px;color:#606060;transform:translate(0.87px,0.70px) scaleX(0.9957);">19. 01. 2026.</span>
<span class="t" style="left:682px;top:218px;font-size:7px;line-height:11px;color:#606060;transform:translate(0.98px,0.70px) scaleX(0.9957);">22. 01. 2026.</span>
<span class="t" style="left:739px;top:218px;font-size:7px;line-height:11px;color:#606060;transform:translate(0.09px,0.70px) scaleX(0.9957);">24. 01. 2026.</span>
<span class="t" style="left:795px;top:218px;font-size:7px;line-height:11px;color:#606060;transform:translate(0.20px,0.70px) scaleX(0.9957);">27. 01. 2026.</span>
<span class="t" style="left:201px;top:256px;font-size:8.3px;line-height:13px;color:#4f5358;font-weight:700;transform:translate(0.70px,0.50px) scaleX(0.8785);">@TIMESTAMP</span>
<span class="t" style="left:304px;top:256px;font-size:8.3px;line-height:13px;color:#4f5358;font-weight:700;transform:translate(0.60px,0.50px) scaleX(0.8555);">RULE.NAME</span>
<span class="t" style="left:420px;top:256px;font-size:8.3px;line-height:13px;color:#4f5358;font-weight:700;transform:translate(0.30px,0.50px) scaleX(0.8316);">EVENT.CATEGORY</span>
<span class="t" style="left:574px;top:256px;font-size:8.3px;line-height:13px;color:#4f5358;font-weight:700;transform:translate(0.60px,0.50px) scaleX(0.8096);">EVENT.RISK_SCORE</span>
<span class="t" style="left:651px;top:256px;font-size:8.3px;line-height:13px;color:#4f5358;font-weight:700;transform:translate(0.80px,0.50px) scaleX(0.8626);">EVENT.ACTION</span>
<span class="t" style="left:767px;top:256px;font-size:8.3px;line-height:13px;color:#4f5358;font-weight:700;transform:translate(0.70px,0.50px) scaleX(0.8343);">EVENT.DATASET</span>
<span class="t" style="left:189px;top:283px;font-size:8.2px;line-height:13px;color:#454545;transform:translate(0.20px,0.80px) scaleX(0.8514);">28. sij 2026., 9:45:21.071</span>
<span class="t" style="left:304px;top:283px;font-size:8.2px;line-height:13px;color:#1e2022;transform:translate(0.70px,0.80px) scaleX(0.8831);">Potential security service disco...</span>
<span class="t" style="left:420px;top:283px;font-size:8.2px;line-height:13px;color:#1e2022;transform:translate(0.30px,0.80px) scaleX(0.8988);">process,intrusion_detection</span>
<span class="t" style="left:628px;top:283px;font-size:8.4px;line-height:13px;color:#fff;-webkit-text-stroke:0.1px #fff;transform:translate(0.70px,0.90px) scaleX(0.9219);">48</span>
<span class="t" style="left:652px;top:283px;font-size:8.2px;line-height:13px;color:#1e2022;transform:translate(0.00px,0.80px) scaleX(0.9404);">rule-triggered</span>
<span class="t" style="left:767px;top:283px;font-size:8.2px;line-height:13px;color:#1e2022;transform:translate(0.70px,0.80px) scaleX(0.8788);">eset.rule</span>
<span class="t" style="left:189px;top:306px;font-size:8.2px;line-height:13px;color:#454545;transform:translate(0.20px,0.17px) scaleX(0.8514);">28. sij 2026., 9:45:21.071</span>
<span class="t" style="left:304px;top:306px;font-size:8.2px;line-height:13px;color:#1e2022;transform:translate(0.70px,0.17px) scaleX(0.8831);">Potential security service disco...</span>
<span class="t" style="left:420px;top:306px;font-size:8.2px;line-height:13px;color:#1e2022;transform:translate(0.30px,0.17px) scaleX(0.8988);">process,intrusion_detection</span>
<span class="t" style="left:628px;top:306px;font-size:8.4px;line-height:13px;color:#fff;-webkit-text-stroke:0.1px #fff;transform:translate(0.70px,0.27px) scaleX(0.9219);">48</span>
<span class="t" style="left:652px;top:306px;font-size:8.2px;line-height:13px;color:#1e2022;transform:translate(0.00px,0.17px) scaleX(0.9404);">rule-triggered</span>
<span class="t" style="left:767px;top:306px;font-size:8.2px;line-height:13px;color:#1e2022;transform:translate(0.70px,0.17px) scaleX(0.8788);">eset.rule</span>
<span class="t" style="left:189px;top:328px;font-size:8.2px;line-height:13px;color:#454545;transform:translate(0.20px,0.54px) scaleX(0.8514);">28. sij 2026., 6:30:25.789</span>
<span class="t" style="left:304px;top:328px;font-size:8.2px;line-height:13px;color:#1e2022;transform:translate(0.70px,0.54px) scaleX(0.8857);">SMB/Exploit.DoublePulsar.B</span>
<span class="t" style="left:420px;top:328px;font-size:8.2px;line-height:13px;color:#1e2022;transform:translate(0.30px,0.54px) scaleX(0.9189);">intrusion_detection,network</span>
<span class="t" style="left:628px;top:328px;font-size:8.4px;line-height:13px;color:#fff;-webkit-text-stroke:0.1px #fff;transform:translate(0.70px,0.64px) scaleX(0.9219);">40</span>
<span class="t" style="left:652px;top:328px;font-size:8.2px;line-height:13px;color:#1e2022;transform:translate(0.00px,0.54px) scaleX(0.9344);">connection-terminated</span>
<span class="t" style="left:767px;top:328px;font-size:8.2px;line-height:13px;color:#1e2022;transform:translate(0.70px,0.54px) scaleX(0.8859);">eset.firewall</span>
<span class="t" style="left:189px;top:350px;font-size:8.2px;line-height:13px;color:#454545;transform:translate(0.20px,0.91px) scaleX(0.8514);">28. sij 2026., 6:30:25.789</span>
<span class="t" style="left:304px;top:350px;font-size:8.2px;line-height:13px;color:#1e2022;transform:translate(0.70px,0.91px) scaleX(0.8857);">SMB/Exploit.DoublePulsar.B</span>
<span class="t" style="left:420px;top:350px;font-size:8.2px;line-height:13px;color:#1e2022;transform:translate(0.30px,0.91px) scaleX(0.9189);">network,intrusion_detection</span>
<span class="t" style="left:628px;top:351px;font-size:8.4px;line-height:13px;color:#fff;-webkit-text-stroke:0.1px #fff;transform:translate(0.70px,0.01px) scaleX(0.9219);">55</span>
<span class="t" style="left:652px;top:350px;font-size:8.2px;line-height:13px;color:#1e2022;transform:translate(0.00px,0.91px) scaleX(0.9344);">connection-terminated</span>
<span class="t" style="left:767px;top:350px;font-size:8.2px;line-height:13px;color:#1e2022;transform:translate(0.70px,0.91px) scaleX(0.8859);">eset.firewall</span>
<span class="t" style="left:189px;top:373px;font-size:8.2px;line-height:13px;color:#454545;transform:translate(0.20px,0.28px) scaleX(0.8514);">27. sij 2026., 9:45:21.470</span>
<span class="t" style="left:304px;top:373px;font-size:8.2px;line-height:13px;color:#1e2022;transform:translate(0.70px,0.28px) scaleX(0.8831);">Potential security service disco...</span>
<span class="t" style="left:420px;top:373px;font-size:8.2px;line-height:13px;color:#1e2022;transform:translate(0.30px,0.28px) scaleX(0.8988);">process,intrusion_detection</span>
<span class="t" style="left:628px;top:373px;font-size:8.4px;line-height:13px;color:#fff;-webkit-text-stroke:0.1px #fff;transform:translate(0.70px,0.38px) scaleX(0.9219);">48</span>
<span class="t" style="left:652px;top:373px;font-size:8.2px;line-height:13px;color:#1e2022;transform:translate(0.00px,0.28px) scaleX(0.9404);">rule-triggered</span>
<span class="t" style="left:767px;top:373px;font-size:8.2px;line-height:13px;color:#1e2022;transform:translate(0.70px,0.28px) scaleX(0.8788);">eset.rule</span>
<span class="t" style="left:189px;top:395px;font-size:8.2px;line-height:13px;color:#454545;transform:translate(0.20px,0.65px) scaleX(0.8514);">27. sij 2026., 9:45:21.470</span>
<span class="t" style="left:304px;top:395px;font-size:8.2px;line-height:13px;color:#1e2022;transform:translate(0.70px,0.65px) scaleX(0.8831);">Potential security service disco...</span>
<span class="t" style="left:420px;top:395px;font-size:8.2px;line-height:13px;color:#1e2022;transform:translate(0.30px,0.65px) scaleX(0.8988);">process,intrusion_detection</span>
<span class="t" style="left:628px;top:395px;font-size:8.4px;line-height:13px;color:#fff;-webkit-text-stroke:0.1px #fff;transform:translate(0.70px,0.75px) scaleX(0.9219);">48</span>
<span class="t" style="left:652px;top:395px;font-size:8.2px;line-height:13px;color:#1e2022;transform:translate(0.00px,0.65px) scaleX(0.9404);">rule-triggered</span>
<span class="t" style="left:767px;top:395px;font-size:8.2px;line-height:13px;color:#1e2022;transform:translate(0.70px,0.65px) scaleX(0.8788);">eset.rule</span>
<span class="t" style="left:189px;top:418px;font-size:8.2px;line-height:13px;color:#454545;transform:translate(0.20px,0.02px) scaleX(0.8571);">27. sij 2026., 6:45:34.113</span>
<span class="t" style="left:304px;top:418px;font-size:8.2px;line-height:13px;color:#1e2022;transform:translate(0.70px,0.02px) scaleX(0.8857);">SMB/Exploit.DoublePulsar.B</span>
<span class="t" style="left:420px;top:418px;font-size:8.2px;line-height:13px;color:#1e2022;transform:translate(0.30px,0.02px) scaleX(0.9189);">network,intrusion_detection</span>
<span class="t" style="left:628px;top:418px;font-size:8.4px;line-height:13px;color:#fff;-webkit-text-stroke:0.1px #fff;transform:translate(0.70px,0.12px) scaleX(0.9219);">55</span>
<span class="t" style="left:652px;top:418px;font-size:8.2px;line-height:13px;color:#1e2022;transform:translate(0.00px,0.02px) scaleX(0.9344);">connection-terminated</span>
<span class="t" style="left:767px;top:418px;font-size:8.2px;line-height:13px;color:#1e2022;transform:translate(0.70px,0.02px) scaleX(0.8859);">eset.firewall</span>
<span class="t" style="left:189px;top:440px;font-size:8.2px;line-height:13px;color:#454545;transform:translate(0.20px,0.39px) scaleX(0.8571);">27. sij 2026., 6:45:34.113</span>
<span class="t" style="left:304px;top:440px;font-size:8.2px;line-height:13px;color:#1e2022;transform:translate(0.70px,0.39px) scaleX(0.8857);">SMB/Exploit.DoublePulsar.B</span>
<span class="t" style="left:420px;top:440px;font-size:8.2px;line-height:13px;color:#1e2022;transform:translate(0.30px,0.39px) scaleX(0.9189);">intrusion_detection,network</span>
<span class="t" style="left:628px;top:440px;font-size:8.4px;line-height:13px;color:#fff;-webkit-text-stroke:0.1px #fff;transform:translate(0.70px,0.49px) scaleX(0.9219);">40</span>
<span class="t" style="left:652px;top:440px;font-size:8.2px;line-height:13px;color:#1e2022;transform:translate(0.00px,0.39px) scaleX(0.9344);">connection-terminated</span>
<span class="t" style="left:767px;top:440px;font-size:8.2px;line-height:13px;color:#1e2022;transform:translate(0.70px,0.39px) scaleX(0.8859);">eset.firewall</span>
<span class="t" style="left:189px;top:462px;font-size:8.2px;line-height:13px;color:#454545;transform:translate(0.20px,0.76px) scaleX(0.8514);">26. sij 2026., 9:45:19.133</span>
<span class="t" style="left:304px;top:462px;font-size:8.2px;line-height:13px;color:#1e2022;transform:translate(0.70px,0.76px) scaleX(0.8831);">Potential security service disco...</span>
<span class="t" style="left:420px;top:462px;font-size:8.2px;line-height:13px;color:#1e2022;transform:translate(0.30px,0.76px) scaleX(0.8988);">process,intrusion_detection</span>
<span class="t" style="left:628px;top:462px;font-size:8.4px;line-height:13px;color:#fff;-webkit-text-stroke:0.1px #fff;transform:translate(0.70px,0.86px) scaleX(0.9219);">48</span>
<span class="t" style="left:652px;top:462px;font-size:8.2px;line-height:13px;color:#1e2022;transform:translate(0.00px,0.76px) scaleX(0.9404);">rule-triggered</span>
<span class="t" style="left:767px;top:462px;font-size:8.2px;line-height:13px;color:#1e2022;transform:translate(0.70px,0.76px) scaleX(0.8788);">eset.rule</span>
<span class="t" style="left:189px;top:485px;font-size:8.2px;line-height:13px;color:#454545;transform:translate(0.20px,0.13px) scaleX(0.8514);">26. sij 2026., 9:45:19.133</span>
<span class="t" style="left:304px;top:485px;font-size:8.2px;line-height:13px;color:#1e2022;transform:translate(0.70px,0.13px) scaleX(0.8831);">Potential security service disco...</span>
<span class="t" style="left:420px;top:485px;font-size:8.2px;line-height:13px;color:#1e2022;transform:translate(0.30px,0.13px) scaleX(0.8988);">process,intrusion_detection</span>
<span class="t" style="left:628px;top:485px;font-size:8.4px;line-height:13px;color:#fff;-webkit-text-stroke:0.1px #fff;transform:translate(0.70px,0.23px) scaleX(0.9219);">48</span>
<span class="t" style="left:652px;top:485px;font-size:8.2px;line-height:13px;color:#1e2022;transform:translate(0.00px,0.13px) scaleX(0.9404);">rule-triggered</span>
<span class="t" style="left:767px;top:485px;font-size:8.2px;line-height:13px;color:#1e2022;transform:translate(0.70px,0.13px) scaleX(0.8788);">eset.rule</span>
<span class="t" style="left:189px;top:507px;font-size:8.2px;line-height:13px;color:#454545;transform:translate(0.20px,0.50px) scaleX(0.8514);">25. sij 2026., 9:45:14.142</span>
<span class="t" style="left:304px;top:507px;font-size:8.2px;line-height:13px;color:#1e2022;transform:translate(0.70px,0.50px) scaleX(0.8831);">Potential security service disco...</span>
<span class="t" style="left:420px;top:507px;font-size:8.2px;line-height:13px;color:#1e2022;transform:translate(0.30px,0.50px) scaleX(0.8988);">process,intrusion_detection</span>
<span class="t" style="left:628px;top:507px;font-size:8.4px;line-height:13px;color:#fff;-webkit-text-stroke:0.1px #fff;transform:translate(0.70px,0.60px) scaleX(0.9219);">48</span>
<span class="t" style="left:652px;top:507px;font-size:8.2px;line-height:13px;color:#1e2022;transform:translate(0.00px,0.50px) scaleX(0.9404);">rule-triggered</span>
<span class="t" style="left:767px;top:507px;font-size:8.2px;line-height:13px;color:#1e2022;transform:translate(0.70px,0.50px) scaleX(0.8788);">eset.rule</span>
<span class="t" style="left:189px;top:529px;font-size:8.2px;line-height:13px;color:#454545;transform:translate(0.20px,0.87px) scaleX(0.8514);">25. sij 2026., 9:45:14.142</span>
<span class="t" style="left:304px;top:529px;font-size:8.2px;line-height:13px;color:#1e2022;transform:translate(0.70px,0.87px) scaleX(0.8831);">Potential security service disco...</span>
<span class="t" style="left:420px;top:529px;font-size:8.2px;line-height:13px;color:#1e2022;transform:translate(0.30px,0.87px) scaleX(0.8988);">process,intrusion_detection</span>
<span class="t" style="left:628px;top:529px;font-size:8.4px;line-height:13px;color:#fff;-webkit-text-stroke:0.1px #fff;transform:translate(0.70px,0.97px) scaleX(0.9219);">48</span>
<span class="t" style="left:652px;top:529px;font-size:8.2px;line-height:13px;color:#1e2022;transform:translate(0.00px,0.87px) scaleX(0.9404);">rule-triggered</span>
<span class="t" style="left:767px;top:529px;font-size:8.2px;line-height:13px;color:#1e2022;transform:translate(0.70px,0.87px) scaleX(0.8788);">eset.rule</span>
</body></html>
